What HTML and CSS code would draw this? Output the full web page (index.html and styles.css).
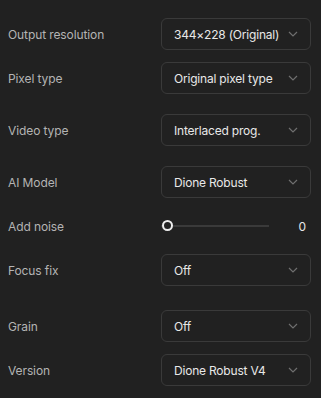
FILE: index.html
```html
<!DOCTYPE html>
<html>

<head>
	<title>Enhance settings</title>
	<meta charset="UTF-8">
	<link rel="stylesheet" href="styles.css">
	<meta name="viewport" content="width=device-width, initial-scale=1">
</head>

<body>
	<div class="panel">
		<div class="row">
			<span class="label">Output resolution</span>
			<div class="select"><span>344×228 (Original)</span><svg class="chevron" width="10" height="6" viewBox="0 0 10 6"><path d="M1 1l4 4 4-4" /></svg></div>
		</div>
		<div class="row">
			<span class="label">Pixel type</span>
			<div class="select"><span>Original pixel type</span><svg class="chevron" width="10" height="6" viewBox="0 0 10 6"><path d="M1 1l4 4 4-4" /></svg></div>
		</div>
		<div class="row wide">
			<span class="label">Video type</span>
			<div class="select"><span>Interlaced prog.</span><svg class="chevron" width="10" height="6" viewBox="0 0 10 6"><path d="M1 1l4 4 4-4" /></svg></div>
		</div>
		<div class="row wide">
			<span class="label">AI Model</span>
			<div class="select"><span>Dione Robust</span><svg class="chevron" width="10" height="6" viewBox="0 0 10 6"><path d="M1 1l4 4 4-4" /></svg></div>
		</div>
		<div class="row">
			<span class="label">Add noise</span>
			<div class="slider">
				<div class="track"><span class="thumb"></span></div>
				<span class="value">0</span>
			</div>
		</div>
		<div class="row">
			<span class="label">Focus fix</span>
			<div class="select"><span>Off</span><svg class="chevron" width="10" height="6" viewBox="0 0 10 6"><path d="M1 1l4 4 4-4" /></svg></div>
		</div>
		<div class="row wider">
			<span class="label">Grain</span>
			<div class="select"><span>Off</span><svg class="chevron" width="10" height="6" viewBox="0 0 10 6"><path d="M1 1l4 4 4-4" /></svg></div>
		</div>
		<div class="row">
			<span class="label">Version</span>
			<div class="select"><span>Dione Robust V4</span><svg class="chevron" width="10" height="6" viewBox="0 0 10 6"><path d="M1 1l4 4 4-4" /></svg></div>
		</div>
	</div>
</body>

</html>
```

FILE: styles.css
```css
body {
	margin: 0;
	background-color: #212121;
	font-family: Inter, "Liberation Sans", sans-serif;
	font-size: 12px;
}

.panel {
	padding: 18px 10px 0 8px;
}

.row {
	display: flex;
	align-items: center;
	height: 32px;
	margin-top: 12px;
}

.row:first-child {
	margin-top: 0;
}

.row.wide {
	margin-top: 20px;
}

.row.wider {
	margin-top: 24px;
}

.label {
	flex: 1;
	color: #b4b4b4;
	letter-spacing: -0.1px;
}

.select {
	display: flex;
	align-items: center;
	justify-content: space-between;
	box-sizing: border-box;
	width: 150px;
	height: 32px;
	padding: 0 12px 0 12px;
	border: 1px solid #3a3a3a;
	border-radius: 6px;
	color: #e8e8e8;
	letter-spacing: -0.2px;
}

.chevron path {
	fill: none;
	stroke: #6f6f6f;
	stroke-width: 1.2;
}

.slider {
	display: flex;
	align-items: center;
	width: 150px;
}

.track {
	position: relative;
	width: 108px;
	height: 2px;
	background-color: #3a3a3a;
}

.thumb {
	position: absolute;
	left: 1px;
	top: -5px;
	box-sizing: border-box;
	width: 11px;
	height: 11px;
	border: 2px solid #ececec;
	border-radius: 50%;
	background-color: #212121;
}

.value {
	flex: 1;
	text-align: right;
	padding-right: 5px;
	color: #e8e8e8;
}
```
